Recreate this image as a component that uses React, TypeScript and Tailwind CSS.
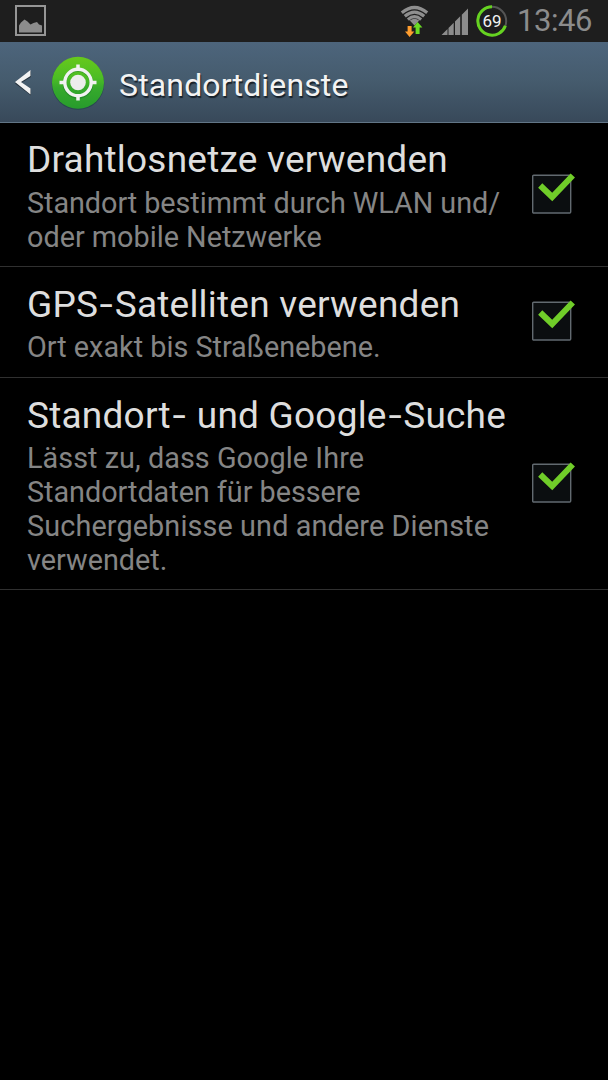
const settings = [
  {
    title: "Drahtlosnetze verwenden",
    lines: [
      { text: "Standort bestimmt durch WLAN und/", tracking: "tracking-[-0.06px]" },
      { text: "oder mobile Netzwerke", tracking: "tracking-normal" },
    ],
    height: "h-[144px]",
  },
  {
    title: "GPS-Satelliten verwenden",
    lines: [{ text: "Ort exakt bis Straßenebene.", tracking: "tracking-normal" }],
    height: "h-[111px]",
  },
  {
    title: "Standort- und Google-Suche",
    lines: [
      { text: "Lässt zu, dass Google Ihre", tracking: "tracking-[0.05px]" },
      { text: "Standortdaten für bessere", tracking: "tracking-[-0.03px]" },
      { text: "Suchergebnisse und andere Dienste", tracking: "tracking-[0.12px]" },
      { text: "verwendet.", tracking: "tracking-normal" },
    ],
    height: "h-[212px]",
  },
];

const PictureIcon = () => (
  <svg width="32" height="32" viewBox="0 0 32 32" fill="none">
    <rect x="1" y="1" width="29" height="29" stroke="#969696" strokeWidth="2" />
    <path d="M4 27.500v-7l2-3 3.500-3 3 2 3 3 3-1.500 3.500-1 2 2.500 3 1v7z" fill="#8c8c8c" />
  </svg>
);

const WifiIcon = () => (
  <svg width="30" height="34" viewBox="0 0 30 34" fill="none">
    <g stroke="#8f8f8f" strokeWidth="3.200">
      <path d="M1.800 8.800Q14.500-1.800 27.200 8.800" />
      <path d="M4.800 12.300Q14.500 4 24.200 12.300" />
      <path d="M7.900 15.600Q14.500 9.800 21.100 15.600" />
    </g>
    <path d="M9.800 16.600Q14.500 13 19.200 16.600L14.500 21.500z" fill="#8f8f8f" />
    <path d="M7.600 22h4v5.500h2.700L9.600 33 5 27.500h2.600z" fill="#ff9d2e" />
    <path d="M15.600 30h4v-6.500h2.800L17.600 18 13 23.500h2.600z" fill="#6bdc24" />
  </svg>
);

const SignalIcon = () => (
  <svg width="29" height="29" viewBox="0 0 29 29" fill="#8c8c8c">
    <path d="M0.500 28l6-6v6zM7.500 28v-7l5.200-5.200V28zM14 28V14.500l5.200-5.200V28zM20.800 28V7.700L27 1.500V28z" />
  </svg>
);

const Battery = () => (
  <div className="grid size-8 place-items-center">
    <svg className="col-start-1 row-start-1" width="32" height="32" viewBox="0 0 32 32" fill="none">
      <circle cx="16" cy="16" r="14.200" stroke="#555" strokeWidth="2" />
      <path d="M16 1.800A14.200 14.200 0 1 0 29.400 20.800" stroke="#66d321" strokeWidth="3" />
    </svg>
    <span className="col-start-1 row-start-1 text-[17px] leading-8 text-[#f2f2f2]">69</span>
  </div>
);

const LocationIcon = () => (
  <svg width="54" height="54" viewBox="0 0 54 54" fill="none">
    <defs>
      <linearGradient id="green" x1="0" y1="0" x2="0" y2="1">
        <stop offset="0" stopColor="#67c91c" />
        <stop offset="0.4" stopColor="#4dbd25" />
        <stop offset="0.6" stopColor="#36aa2c" />
        <stop offset="1" stopColor="#279b2c" />
      </linearGradient>
    </defs>
    <circle cx="27" cy="27.600" r="26.200" fill="#294650" />
    <circle cx="27" cy="26.800" r="26" fill="url(#green)" />
    <circle cx="27" cy="27.500" r="13.500" stroke="#1d7a27" strokeOpacity="0.6" strokeWidth="3.500" />
    <circle cx="27" cy="26.500" r="13.200" stroke="#f2f2f2" strokeWidth="3.400" />
    <path d="M27 8.500v6M27 38.500v6M8.500 26.500h6M39.500 26.500h6" stroke="#f2f2f2" strokeWidth="3.500" />
    <circle cx="27" cy="26.500" r="7.800" fill="#ededed" />
  </svg>
);

const Checkbox = () => (
  <svg className="-mt-1 shrink-0" width="46" height="44" viewBox="0 0 46 44" fill="none">
    <rect x="2.700" y="4.200" width="38" height="37.800" rx="1" fill="#0b0e10" stroke="#626a70" strokeWidth="1.400" />
    <path d="M10.200 14.500l12 11.500L42.800 4.500" stroke="#70cd29" strokeWidth="6" />
  </svg>
);

// hyphens are set wider than the font's own
const WideHyphens = ({ text }: { text: string }) =>
  text.split(/(-)/).map((part, i) =>
    part === "-" ? (
      <span key={i} className="inline-block w-[16.500px] scale-x-130 text-center">
        -
      </span>
    ) : (
      part
    ),
  );

export default function App() {
  return (
    <div className="flex h-[1080px] w-full flex-col overflow-hidden bg-black font-['Roboto',sans-serif]">
      <header className="flex h-[42px] shrink-0 items-center bg-[#1e1e1e] pr-4 pl-[15px]">
        <PictureIcon />
        <div className="ml-auto flex items-center">
          <WifiIcon />
          <div className="ml-[11px]">
            <SignalIcon />
          </div>
          <div className="ml-[6px]">
            <Battery />
          </div>
          <span className="ml-[9px] w-[75px] text-[31px] leading-[42px] tracking-[-0.450px] whitespace-nowrap text-[#8c8c8c]">
            13:46
          </span>
        </div>
      </header>

      <div className="flex h-[81px] shrink-0 items-center border-b border-[#627586] bg-linear-to-b from-[#4d657c] via-[#455b6d] to-[#38495a] pl-[14px]">
        <svg width="18" height="28" viewBox="0 0 18 28" fill="none">
          <path d="M17 3v6L7.500 14.800 17 21.500v6L1 15.500z" fill="#25323d" />
          <path d="M16.500 2v6L7 14l9.500 6.500v6L1 14z" fill="#f2f2f2" />
        </svg>
        <div className="mt-px ml-[19px]">
          <LocationIcon />
        </div>
        <h1 className="mt-[5px] ml-[14px] text-[32px] tracking-[0.150px] whitespace-nowrap text-[#f3f3f3] [text-shadow:1px_2px_1px_#17212a]">
          Standortdienste
        </h1>
      </div>

      <ul>
        {settings.map(({ title, lines, height }) => (
          <li
            key={title}
            className={`flex items-center justify-between border-b border-[#303030] pr-8 pl-[27px] ${height}`}
          >
            <div className="mt-1 whitespace-nowrap">
              <h2 className="text-[37px] leading-[44px] tracking-[0.220px] text-[#dedede]">
                <WideHyphens text={title} />
              </h2>
              <p className="mt-[4.500px] text-[28.800px] leading-[33.800px] text-[#858585]">
                {lines.map(({ text, tracking }) => (
                  <span key={text} className={`block ${tracking}`}>
                    {text}
                  </span>
                ))}
              </p>
            </div>
            <Checkbox />
          </li>
        ))}
      </ul>
    </div>
  );
}
